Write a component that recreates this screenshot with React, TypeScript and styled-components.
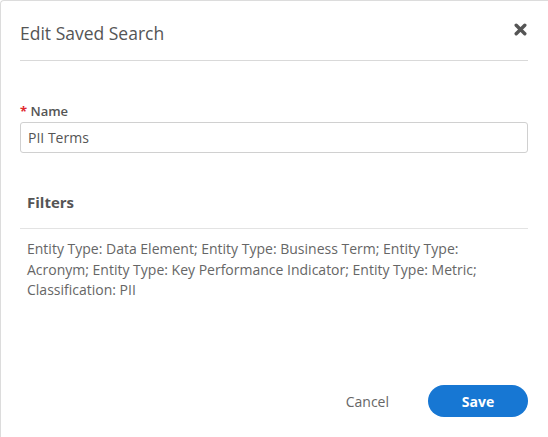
import styled, { createGlobalStyle } from "styled-components";

const GlobalStyle = createGlobalStyle`
  html, body {
    margin: 0;
    padding: 0;
    background: #ffffff;
    overflow: hidden;
  }
  body {
    font-family: "Open Sans", "Liberation Sans", sans-serif;
    color: #555555;
  }
`;

const filters =
  "Entity Type: Data Element; Entity Type: Business Term; Entity Type: Acronym; Entity Type: Key Performance Indicator; Entity Type: Metric; Classification: PII";

const App = () => {
  return (
    <>
      <GlobalStyle />
      <Dialog>
        <Header>
          <Title>Edit Saved Search</Title>
          <CloseButton aria-label="Close">
            <svg width="13" height="13" viewBox="0 0 13 13">
              <path
                d="M2.2 2.2 L10.8 10.8 M10.8 2.2 L2.2 10.8"
                stroke="#555555"
                strokeWidth="3.4"
                strokeLinecap="round"
              />
            </svg>
          </CloseButton>
        </Header>

        <Body>
          <Field>
            <Label>
              <Required>*</Required> Name
            </Label>
            <Input defaultValue="PII Terms" />
          </Field>

          <Section>
            <SectionTitle>Filters</SectionTitle>
            <FilterText>{filters}</FilterText>
          </Section>
        </Body>

        <Footer>
          <LinkButton>Cancel</LinkButton>
          <PrimaryButton>Save</PrimaryButton>
        </Footer>
      </Dialog>
    </>
  );
};

export default App;

const Dialog = styled.div`
  box-sizing: border-box;
  width: 100%;
  height: 437px;
  border-top: 1px solid #dcdcdc;
  border-left: 1px solid #dcdcdc;
  border-top-left-radius: 4px;
  padding: 0 19px;
  display: flex;
  flex-direction: column;
`;

const Header = styled.div`
  width: 508px;
  height: 60px;
  display: flex;
  align-items: center;
  justify-content: space-between;
  border-bottom: 1px solid #d9d9d9;
  box-sizing: border-box;
  padding-top: 4px;
`;

const Title = styled.h2`
  margin: 0;
  font-size: 17.5px;
  font-weight: 400;
  color: #555555;
`;

const CloseButton = styled.button`
  border: 0;
  background: none;
  padding: 0;
  margin-right: 1px;
  margin-bottom: 6px;
  display: flex;
  cursor: pointer;
`;

const Body = styled.div`
  width: 508px;
  display: flex;
  flex-direction: column;
  padding-top: 42px;
`;

const Field = styled.div`
  display: flex;
  flex-direction: column;
  gap: 3px;
`;

const Label = styled.label`
  font-size: 13px;
  font-weight: 600;
  color: #555555;
  line-height: 16px;
`;

const Required = styled.span`
  color: #e0282e;
  font-weight: 700;
`;

const Input = styled.input`
  box-sizing: border-box;
  height: 31px;
  width: 100%;
  border: 1px solid #d0d0d0;
  border-radius: 3px;
  padding: 0 7px;
  font-family: "Open Sans", "Liberation Sans", sans-serif;
  font-size: 14px;
  color: #555555;
  outline: none;
`;

const Section = styled.div`
  margin-top: 31px;
  display: flex;
  flex-direction: column;
`;

const SectionTitle = styled.h3`
  margin: 0;
  padding: 8px 7px 0;
  height: 45px;
  box-sizing: border-box;
  font-size: 15px;
  font-weight: 700;
  color: #555555;
  border-bottom: 1px solid #e3e3e3;
  line-height: 20px;
`;

const FilterText = styled.p`
  margin: 0;
  padding: 10px 40px 0 7px;
  font-size: 14px;
  line-height: 20.5px;
  color: #666666;
`;

const Footer = styled.div`
  width: 508px;
  margin-top: auto;
  margin-bottom: 20px;
  display: flex;
  justify-content: flex-end;
  align-items: center;
  gap: 39px;
`;

const LinkButton = styled.button`
  border: 0;
  background: none;
  padding: 0;
  font-family: "Open Sans", "Liberation Sans", sans-serif;
  font-size: 14px;
  color: #666666;
  cursor: pointer;
`;

const PrimaryButton = styled.button`
  width: 100px;
  height: 32px;
  border: 0;
  border-radius: 16px;
  background: #1777d3;
  color: #ffffff;
  font-family: "Open Sans", "Liberation Sans", sans-serif;
  font-size: 14px;
  font-weight: 700;
  cursor: pointer;
`;
